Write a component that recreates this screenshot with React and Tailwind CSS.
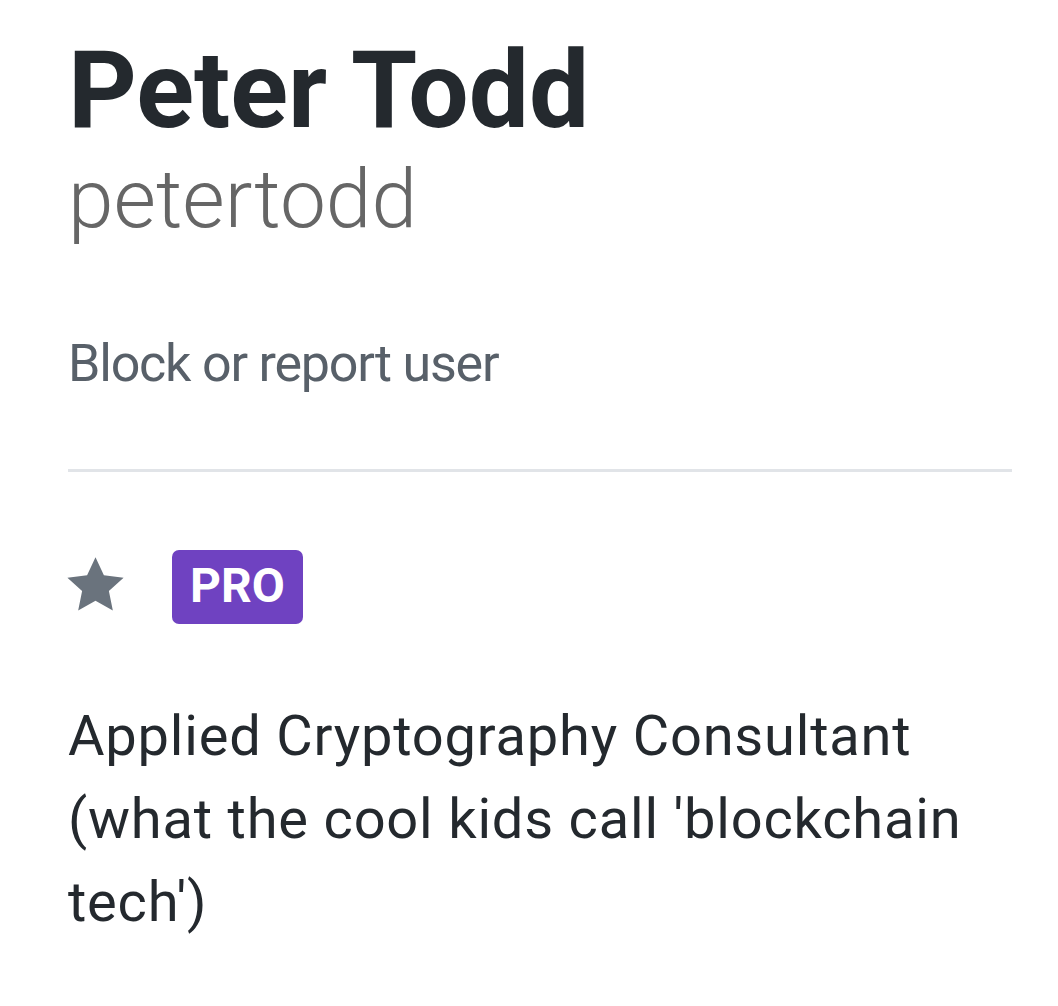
const Star = () => (
  <svg viewBox="0 0 24 24" className="w-[63px] h-[63px] -ml-[4px] -mt-[6px] text-[#6a737d]" fill="currentColor">
    <path d="M12 1.6l3.2 6.9 7.5.9-5.6 5.1 1.5 7.4L12 18.2l-6.6 3.7 1.5-7.4-5.6-5.1 7.5-.9z" />
  </svg>
);

export default function App() {
  return (
    <div className="min-h-screen bg-white font-['Roboto',sans-serif] pl-[68px] pr-[46px]">
      {/* Names */}
      <div className="pt-[37px]">
        <h1 className="text-[107px] leading-[107px] font-bold text-[#24292e]">Peter Todd</h1>
        <div className="mt-[14px] text-[82px] leading-[82px] font-light text-[#666666]">petertodd</div>
      </div>

      <div className="mt-[98px] text-[52px] leading-[52px] tracking-[-1.2px] text-[#586069]">Block or report user</div>

      <div className="mt-[79px] h-[3px] bg-[#e1e4e8]" />

      {/* Badges */}
      <div className="mt-[78px] flex items-center gap-[45px]">
        <Star />
        <span className="w-[131px] h-[74px] pb-[2px] flex items-center justify-center rounded-[7px] bg-[#6f42c1] text-white font-bold text-[48px] leading-none">
          PRO
        </span>
      </div>

      {/* Bio */}
      <div className="mt-[71px] text-[56px] leading-[83px] tracking-[0.8px] text-[#24292e] max-w-[920px]">
        Applied Cryptography Consultant (what the cool kids call 'blockchain tech')
      </div>
    </div>
  );
}
